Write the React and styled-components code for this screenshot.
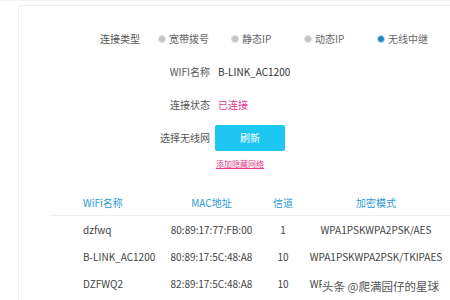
import React from 'react';
import styled, { createGlobalStyle } from 'styled-components';

const GlobalStyle = createGlobalStyle`
  html, body {
    margin: 0;
    padding: 0;
    background: #fff;
  }
  body {
    font-family: "Noto Sans CJK SC", "Noto Sans", sans-serif;
    font-size: 10px;
    color: #444;
  }
`;

const networks = [
  { name: 'dzfwq', mac: '80:89:17:77:FB:00', channel: '1', mode: 'WPA1PSKWPA2PSK/AES' },
  { name: 'B-LINK_AC1200', mac: '80:89:17:5C:48:A8', channel: '10', mode: 'WPA1PSKWPA2PSK/TKIPAES' },
  { name: 'DZFWQ2', mac: '82:89:17:5C:48:A8', channel: '10', mode: 'WPA1PSKWPA2PSK/TKIPAES' },
];

const types = ['宽带拨号', '静态IP', '动态IP', '无线中继'];

function App() {
  return (
    <Page>
      <GlobalStyle />
      <Card>
        <Form>
          <TypeRow>
            <TypeLabel>连接类型</TypeLabel>
            <RadioGroup>
              {types.map((t, i) => (
                <RadioItem key={t}>
                  <Dot checked={i === 3} />
                  {t}
                </RadioItem>
              ))}
            </RadioGroup>
          </TypeRow>
          <FieldRow>
            <Label>WIFI名称</Label>
            <Value>B-LINK_AC1200</Value>
          </FieldRow>
          <FieldRow>
            <Label>连接状态</Label>
            <Value pink>已连接</Value>
          </FieldRow>
          <FieldRow>
            <Label>选择无线网</Label>
            <RefreshButton>刷新</RefreshButton>
          </FieldRow>
          <LinkRow>
            <HiddenLink href="#">添加隐藏网络</HiddenLink>
          </LinkRow>
        </Form>

        <Table>
          <HeadRow>
            <HeadCell>WiFi名称</HeadCell>
            <HeadCell center>MAC地址</HeadCell>
            <HeadCell center>信道</HeadCell>
            <HeadCell center>加密模式</HeadCell>
          </HeadRow>
          {networks.map((n) => (
            <BodyRow key={n.name}>
              <Cell>{n.name}</Cell>
              <Cell center>{n.mac}</Cell>
              <Cell center>{n.channel}</Cell>
              <Cell center>{n.mode}</Cell>
            </BodyRow>
          ))}
        </Table>
      </Card>
      <Watermark>头条 @爬满园仔的星球</Watermark>
    </Page>
  );
}

export default App;

// STYLED COMPONENTS
const Page = styled.div`
  position: relative;
  width: 450px;
  height: 300px;
  overflow: hidden;
  border-top: 1px solid #f3f3f3;
  box-sizing: border-box;
  padding-top: 4px;
`;

const Card = styled.div`
  margin-left: 18px;
  height: 320px;
  border-top: 1px solid #ececec;
  border-left: 1px solid #ececec;
  border-top-left-radius: 4px;
  padding-top: 16px;
  box-sizing: border-box;
`;

const Form = styled.div`
  display: flex;
  flex-direction: column;
`;

const TypeRow = styled.div`
  display: flex;
  align-items: center;
  height: 33px;
  padding-left: 81px;
`;

const TypeLabel = styled.span`
  color: #555;
  width: 62px;
`;

const RadioGroup = styled.div`
  display: flex;
`;

const RadioItem = styled.label`
  display: flex;
  align-items: center;
  gap: 3px;
  width: 73px;
  color: #666;
`;

const Dot = styled.span`
  width: 8px;
  height: 8px;
  border-radius: 50%;
  box-sizing: border-box;
  border: 1.5px solid ${(p) => (p.checked ? '#b9dcec' : '#e2e2e2')};
  background: ${(p) => (p.checked ? '#1b87bd' : '#c4c4c4')};
`;

const FieldRow = styled.div`
  display: flex;
  align-items: center;
  height: 33px;
`;

const Label = styled.span`
  width: 191px;
  text-align: right;
  color: #555;
  padding-right: 8px;
`;

const Value = styled.span`
  color: ${(p) => (p.pink ? '#e5378c' : '#333')};
`;

const RefreshButton = styled.button`
  width: 70px;
  height: 26px;
  border: none;
  border-radius: 2px;
  background: #1ec6f2;
  color: #fff;
  font-family: inherit;
  font-size: 10px;
  margin-left: -3px;
`;

const LinkRow = styled.div`
  display: flex;
  height: 18px;
  padding-left: 197px;
  align-items: center;
`;

const HiddenLink = styled.a`
  color: #e5378c;
  font-size: 8px;
  text-decoration: underline;
`;

const Table = styled.div`
  margin-left: 31px;
  margin-top: 17px;
`;

const HeadRow = styled.div`
  display: grid;
  grid-template-columns: 82px 93px 50px 136px;
  padding-left: 33px;
  height: 26px;
  align-items: center;
  border-bottom: 1px solid #efefef;
`;

const HeadCell = styled.span`
  color: #2c9ad6;
  text-align: ${(p) => (p.center ? 'center' : 'left')};
`;

const BodyRow = styled.div`
  display: grid;
  grid-template-columns: 82px 93px 50px 136px;
  padding-left: 33px;
  height: 27px;
  align-items: center;
`;

const Cell = styled.span`
  color: #444;
  white-space: nowrap;
  text-align: ${(p) => (p.center ? 'center' : 'left')};
`;

const Watermark = styled.div`
  position: absolute;
  left: 322px;
  top: 277px;
  padding-right: 8px;
  font-size: 11.5px;
  color: #555;
  background: #fff;
  white-space: nowrap;
  text-shadow: 0 0 1px #fff;
`;
